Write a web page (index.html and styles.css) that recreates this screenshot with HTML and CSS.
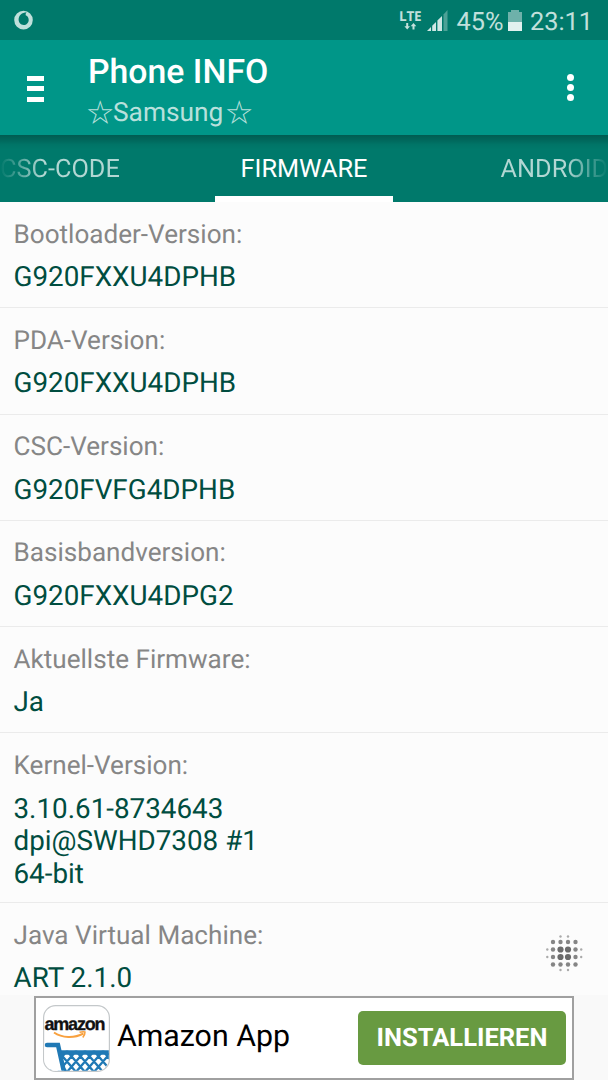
FILE: index.html
```html
<!DOCTYPE html>
<html lang="de">
<head>
<meta charset="utf-8">
<title>Phone INFO</title>
<link rel="stylesheet" href="styles.css">
</head>
<body>
<div class="screen">
  <div class="statusbar">
    <svg class="carrier" width="20" height="20" viewBox="0 0 20 20"><path fill="#bfe0db" fill-rule="evenodd" d="M9.500.8a9.300 9.300 0 1 0 0 18.600 9.300 9.300 0 0 0 0-18.600ZM12.800 2.200C11.800 2.900 11.500 4 11.700 5.200c1.900.8 3 2.500 3 4.700 0 2.900-2.200 5-5 5-3.100 0-5.100-2.400-5.100-5.300C4.600 5.700 7.800 2.300 12.800 2.200Z"/></svg>
    <div class="status-right">
      <div class="lte"><span>LTE</span>
        <svg width="13" height="7" viewBox="0 0 13 7"><path fill="#c4e1dd" d="M2.200 0h2v3.200h1.800L3.200 6.500.4 3.200h1.800ZM8.500 6.500h2V3.300h1.800L9.500 0 6.700 3.300h1.800Z"/></svg>
      </div>
      <svg class="signal" width="21" height="21" viewBox="0 0 21 21"><path fill="#cfe7e4" d="M0 21l4-4v4ZM5.200 21v-5.200L9 12v9ZM10.400 21V10.600L15 6v15Z"/><path fill="#4da196" d="M16.500 4.500 20.500 0v21h-4Z"/></svg>
      <span class="percent">45%</span>
      <svg class="battery" width="14" height="21" viewBox="0 0 14 21"><path fill="#6eb1aa" d="M3 0h8v2h3v10H0V2h3Z"/><path fill="#e2f1ef" d="M0 12h14v9H0Z"/></svg>
      <span class="clock">23:11</span>
    </div>
  </div>
  <header class="toolbar">
    <div class="menu"><i></i><i></i><i></i></div>
    <div class="titles"><h1>Phone INFO</h1><p><span class="star">☆</span><span class="maker">Samsung</span><span class="star">☆</span></p></div>
    <div class="overflow"><i></i><i></i><i></i></div>
  </header>
  <nav class="tabs">
    <span class="tab tab-left">CSC-CODE</span>
    <span class="tab tab-active">FIRMWARE</span>
    <span class="tab tab-right">ANDROID</span>
  </nav>
  <main class="list">
    <section class="row"><h2>Bootloader-Version:</h2><p>G920FXXU4DPHB</p></section>
    <section class="row"><h2>PDA-Version:</h2><p>G920FXXU4DPHB</p></section>
    <section class="row"><h2>CSC-Version:</h2><p>G920FVFG4DPHB</p></section>
    <section class="row"><h2>Basisbandversion:</h2><p>G920FXXU4DPG2</p></section>
    <section class="row"><h2>Aktuellste Firmware:</h2><p>Ja</p></section>
    <section class="row row-tall"><h2>Kernel-Version:</h2><p>3.10.61-8734643<br>dpi@SWHD7308 #1<br>64-bit</p></section>
    <section class="row row-last"><h2>Java Virtual Machine:</h2><p>ART 2.1.0</p></section>
    <svg class="dots" width="40" height="40" viewBox="0 0 40 40">
      <g fill="#6b6b6b"><circle cx="16.500" cy="16.500" r="3.100"/><circle cx="24" cy="16.500" r="3.100"/><circle cx="16.500" cy="24" r="3.100"/><circle cx="24" cy="24" r="3.100"/></g>
      <g fill="#858585"><circle cx="9" cy="9" r="2.200"/><circle cx="16.500" cy="9" r="2.200"/><circle cx="24" cy="9" r="2.200"/><circle cx="31.500" cy="9" r="2.200"/><circle cx="9" cy="16.500" r="2.200"/><circle cx="31.500" cy="16.500" r="2.200"/><circle cx="9" cy="24" r="2.200"/><circle cx="31.500" cy="24" r="2.200"/><circle cx="9" cy="31.500" r="2.200"/><circle cx="16.500" cy="31.500" r="2.200"/><circle cx="24" cy="31.500" r="2.200"/><circle cx="31.500" cy="31.500" r="2.200"/></g>
      <g fill="#aaa"><circle cx="16.500" cy="3.500" r="1.200"/><circle cx="24" cy="3.500" r="1.200"/><circle cx="16.500" cy="37" r="1.200"/><circle cx="24" cy="37" r="1.200"/><circle cx="3.300" cy="16.500" r="1.200"/><circle cx="3.300" cy="24" r="1.200"/><circle cx="37.200" cy="16.500" r="1.200"/><circle cx="37.200" cy="24" r="1.200"/></g>
    </svg>
  </main>
  <footer class="adbar">
    <div class="ad">
      <svg class="adicon" width="67" height="67" viewBox="0 0 67 67">
        <defs><clipPath id="tile"><rect x="1.200" y="1.200" width="64.600" height="64.600" rx="12"/></clipPath></defs>
        <rect x=".6" y=".6" width="65.800" height="65.800" rx="12" fill="#fff" stroke="#c4c8ca" stroke-width="1.200"/>
        <text x="1.500" y="25" class="brand">amazon</text>
        <path d="M11 27.500C19 33 31 33.500 40.500 28.500" fill="none" stroke="#f8a13f" stroke-width="2"/>
        <path d="M36.500 27.300Q40 26.300 42 27 42.200 29.500 39.800 32.500" fill="none" stroke="#f8a13f" stroke-width="1.500"/>
        <g clip-path="url(#tile)" fill="none" stroke="#2079b5">
          <path stroke-width="2.300" d="M6 46 24 67M15 46 33 67M24 46 42 67M33 46 51 67M42 46 60 67M51 46 69 67M60 46 78 67M24 46 6 67M33 46 15 67M42 46 24 67M51 46 33 67M60 46 42 67M69 46 51 67M78 46 60 67"/>
          <path stroke="none" fill="#fff" d="M0 42h15l6 25H0Z"/>
          <path d="M17 47.500H67" stroke-width="4.500"/>
          <path d="M4 40h11L21 67" stroke-width="4.500" stroke-linecap="round"/>
        </g>
      </svg>
      <span class="adname">Amazon App</span>
      <span class="install">INSTALLIEREN</span>
    </div>
  </footer>
</div>
</body>
</html>
```
FILE: styles.css
```css
* { box-sizing: border-box; margin: 0; padding: 0; }
body { width: 608px; height: 1080px; overflow: hidden; font-family: Roboto, "Noto Sans CJK JP", sans-serif; background: #fcfcfc; text-rendering: geometricPrecision; }
.screen { width: 608px; height: 1080px; display: flex; flex-direction: column; }
svg { display: block; flex: none; }

.statusbar { height: 40px; flex: none; background: #00796b; display: flex; justify-content: space-between; padding: 0 17px 0 14px; color: #c1e0dc; }
.carrier { margin-top: 10px; }
.status-right { display: flex; align-items: flex-start; white-space: nowrap; }
.lte { width: 22px; padding-top: 10px; margin-right: 6px; font: 700 13.500px/12px "Open Sans", sans-serif; letter-spacing: -.2px; }
.lte span { display: block; }
.lte svg { margin: 1px 0 0 5px; }
.signal { margin: 10px 10px 0 0; }
.percent, .clock { font-size: 25.300px; line-height: 38px; padding-top: 4px; }
.percent { width: 47px; margin: 0 6px 0 -1.500px; }
.battery { margin: 10px 9px 0 -1.500px; }
.clock { width: 61px; margin-left: -1px; }

.toolbar { height: 95px; flex: none; background: #009688; display: flex; align-items: flex-start; color: #fff; position: relative; z-index: 1; }
.toolbar::after { content: ""; position: absolute; left: 0; right: 0; top: 100%; height: 15px; background: linear-gradient(rgba(0,0,0,.24), rgba(0,0,0,.14) 35%, rgba(0,0,0,.04) 65%, transparent); }
.menu { width: 17px; margin: 36px 0 0 27px; display: flex; flex-direction: column; gap: 5.300px; }
.menu i { height: 5px; background: #fff; }
.titles { margin-left: 44px; flex: 1; white-space: nowrap; }
.titles h1 { font-size: 33.800px; font-weight: 500; line-height: 40px; margin-top: 13px; }
.titles p { font-size: 26.300px; line-height: 32px; margin-top: 4px; color: #b8e0dc; display: flex; }
.star { font-family: "Noto Sans CJK JP", sans-serif; width: 25px; margin-top: -2px; margin-left: -1px; }
.maker { width: 114px; margin-left: 1px; }
.overflow { margin: 34px 34px 0 0; display: flex; flex-direction: column; gap: 3px; }
.overflow i { width: 7px; height: 7px; border-radius: 50%; background: #fff; }

.tabs { height: 67px; flex: none; background: #00796b; display: grid; grid-template: 67px / 215px 178px 215px; font-size: 25.300px; line-height: 70px; white-space: nowrap; color: #b2d7d3; }
.tab-left { padding-left: 0; color: transparent; background: linear-gradient(90deg, #00796b, #b2d7d3 42px); background-clip: text; -webkit-background-clip: text; }
.tab-active { text-align: center; color: #fff; box-shadow: inset 0 -6px #fff; }
.tab-right { padding-left: 107.500px; color: transparent; background: linear-gradient(270deg, #00796b, #b2d7d3 42px); background-clip: text; -webkit-background-clip: text; }

.list { height: 793px; flex: none; background: #fcfcfc; position: relative; overflow: hidden; }
.row { height: 106.300px; padding: 16.600px 13.500px 0; border-bottom: 1px solid #ebebeb; white-space: nowrap; }
.row h2 { font-size: 26.100px; line-height: 32px; font-weight: 400; color: #868686; }
.row p { font-size: 27.800px; line-height: 32.600px; margin-top: 10.500px; color: #004d40; }
.row-tall { height: 169.800px; }
.row-last { border: 0; }
.dots { position: absolute; left: 544px; top: 731px; }

.adbar { flex: 1; background: #f9f9f9; padding: 1px 34px 0; }
.ad { width: 540px; height: 84px; border: 2px solid #a0a0a0; background: #fff; display: flex; align-items: center; }
.adicon { margin-left: 7px; }
.brand { font: 700 18px "Liberation Sans", sans-serif; letter-spacing: -1.200px; fill: #111; stroke: #111; stroke-width: .3px; }
.adname { font-size: 30.300px; line-height: 36px; margin: 0 0 2px 7px; flex: 1; color: #000; white-space: nowrap; }
.install { width: 208px; height: 54px; margin-right: 6px; border-radius: 5px; background: #689a41; color: #fff; font-size: 25.500px; font-weight: 700; line-height: 54px; text-align: center; }
```
